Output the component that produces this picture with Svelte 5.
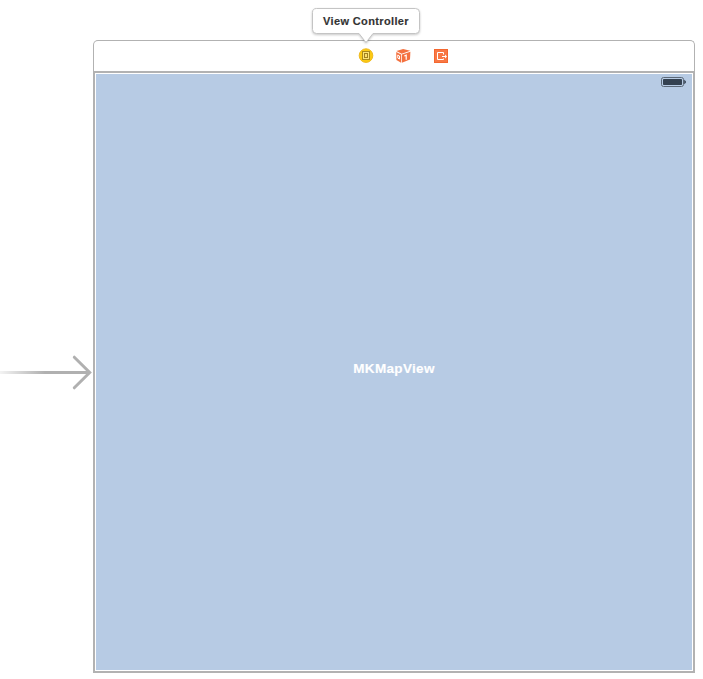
<script lang="ts">
  const title = 'View Controller';
  const viewName = 'MKMapView';
</script>

<main class="canvas">
  <section class="scene">
    <header class="dock">
      <svg class="icon" width="16" height="16" viewBox="0 0 16 16" aria-label="View Controller">
        <circle cx="8" cy="7.6" r="6.8" fill="#fcca12" stroke="#efb91d" stroke-width="1" />
        <rect x="4.5" y="3.5" width="7" height="8" fill="#fbe477" stroke="#a98a1c" />
        <rect x="6.5" y="5.5" width="3" height="4" fill="#fbe068" stroke="#a08020" />
      </svg>
      <svg class="icon" width="16" height="16" viewBox="-.6 0 16 16" aria-label="First Responder">
        <path d="M.8 3.1 7.5 1l7.2 1.8L6.1 5.8Z" fill="#f4713f" />
        <path d="M.6 4 5.5 6.5v8.2L.8 12Z" fill="#f4713f" />
        <path d="M6.3 6.6 14.8 3.8 14.4 11.5 6.3 14.8Z" fill="#f4713f" />
        <path d="M2.2 7 3.9 8v3.1L2.2 10.1Z" fill="none" stroke="#fff" stroke-width="1" />
        <path d="M8.7 8 10.6 7.2v4.6" fill="none" stroke="#fff" stroke-width="1.2" />
      </svg>
      <svg class="icon" width="16" height="16" viewBox="0 0 16 16" aria-label="Exit">
        <rect x="1" y="1" width="14" height="14" fill="#f4672f" />
        <rect x="2" y="2" width="12" height="12" fill="#f87845" />
        <path d="M10.5 6.5v-2h-6v7h6v-1M9 8.5h4" fill="none" stroke="#fff" stroke-width="1" />
        <path d="M12 6.6 14 8.5 12 10.4Z" fill="#fff" />
      </svg>
      <div class="tooltip">
        <svg width="120" height="44" viewBox="0 0 120 44" aria-hidden="true">
          <path d="M10.5 5.5h99a4 4 0 0 1 4 4v17a4 4 0 0 1-4 4H67L60 39.5 53 30.5H10.5a4 4 0 0 1-4-4v-17a4 4 0 0 1 4-4Z" />
        </svg>
        <span>{title}</span>
      </div>
    </header>
    <div class="screen">
      <div class="map">
        <svg class="battery" width="26" height="10" viewBox="0 0 26 10" aria-label="Battery">
          <rect x="1.5" y=".5" width="22" height="9" rx="2" fill="none" stroke="#5b6877" />
          <rect x="3" y="2" width="19" height="6" rx=".7" fill="#344150" />
          <path d="M24.5 3.2a2 2 0 0 1 0 3.6Z" fill="#344150" stroke="#344150" stroke-width=".6" />
        </svg>
        <span class="name">{viewName}</span>
      </div>
    </div>
  </section>
  <svg class="entry" width="93" height="36" viewBox="0 0 93 36" aria-hidden="true">
    <defs>
      <linearGradient id="fade" gradientUnits="userSpaceOnUse" x1="0" y1="0" x2="45" y2="0">
        <stop offset="0" stop-color="#b0b0b0" stop-opacity=".15" />
        <stop offset="1" stop-color="#b0b0b0" />
      </linearGradient>
    </defs>
    <rect x="0" y="16" width="90" height="3" fill="url(#fade)" />
    <path d="M74.3 2.2 89.7 17.5 74.3 32.8" fill="none" stroke="#b0b0b0" stroke-width="3" stroke-linecap="round" />
  </svg>
</main>

<style>
  :global(body) { background: #fff; }
  .canvas {
    position: relative;
    box-sizing: border-box;
    width: 703px;
    height: 679px;
    padding: 40px 0 0 93px;
    overflow: hidden;
    background: #fff;
    font-family: "Liberation Sans", Arial, sans-serif;
  }
  .scene { width: 602px; }
  .dock {
    position: relative;
    box-sizing: border-box;
    height: 31px;
    display: flex;
    gap: 21.4px;
    padding: 7px 0 0 264px;
    border: 1px solid #b2b2b2;
    border-bottom: 0;
    border-radius: 5px 5px 0 0;
  }
  .icon { flex: none; }
  .screen {
    box-sizing: border-box;
    height: 602px;
    padding: 1px;
    border: 2px solid #b2b2b2;
  }
  .map {
    box-sizing: border-box;
    height: 100%;
    display: flex;
    flex-direction: column;
    align-items: center;
    background: #b7cbe4;
    padding-top: 3px;
  }
  .battery { align-self: flex-end; margin-right: 6px; }
  .name {
    margin-top: 273px;
    font: bold 13.5px/18px "Liberation Sans", Arial, sans-serif;
    letter-spacing: 0.33px;
    -webkit-text-stroke: 0.15px #fff;
    color: #fff;
    white-space: nowrap;
  }
  .tooltip {
    position: absolute;
    left: 212px;
    top: -38px;
    width: 120px;
    height: 44px;
  }
  .tooltip svg { display: block; filter: drop-shadow(0 1px 1px rgba(0, 0, 0, 0.22)); }
  .tooltip path { fill: #fff; stroke: #c4c4c4; }
  .tooltip span {
    position: absolute;
    inset: 9px 0 auto;
    text-align: center;
    font-size: 11px;
    line-height: 18px;
    font-weight: bold;
    letter-spacing: 0.36px;
    -webkit-text-stroke: 0.15px #333;
    color: #333;
  }
  .entry { position: absolute; left: 0; top: 355px; }
</style>
